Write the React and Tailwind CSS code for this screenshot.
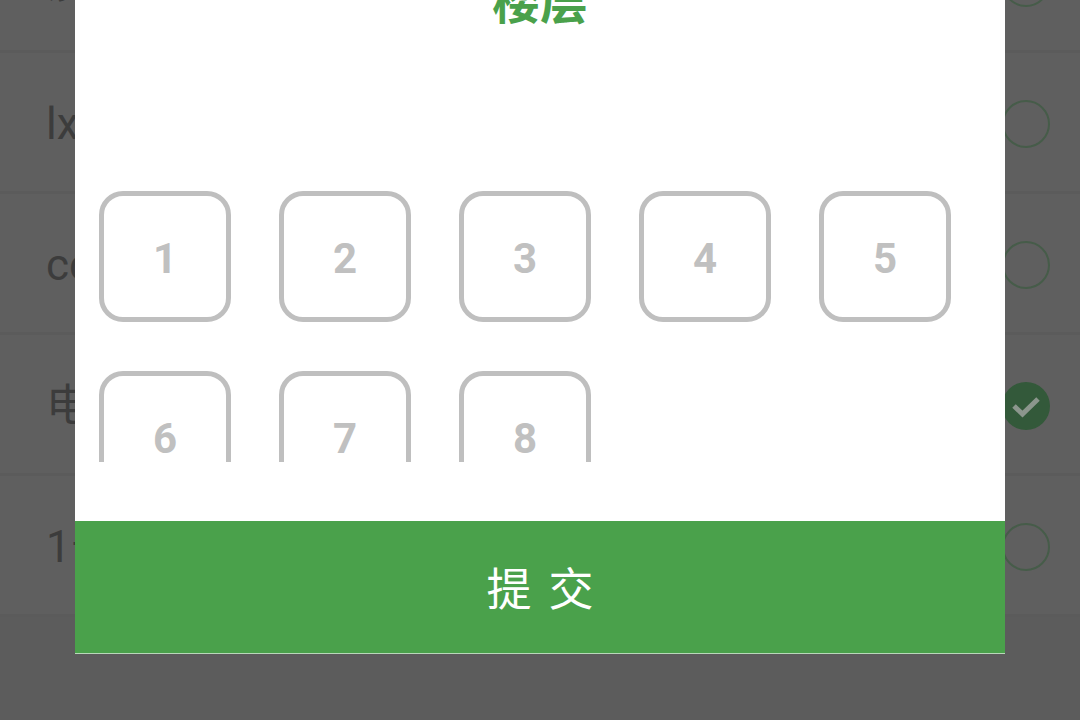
import React from 'react'

const rows = [
  { label: '没', checked: false },
  { label: 'lxxx', checked: false },
  { label: 'cccc', checked: false },
  { label: '电梯', checked: true },
  { label: '1号', checked: false },
]

const floors = [1, 2, 3, 4, 5, 6, 7, 8]

const Radio = ({ checked }) => {
  if (checked) {
    return (
      <div className="w-[48px] h-[48px] rounded-full bg-[#33593a] flex items-center justify-center">
        <svg width="34" height="34" viewBox="0 0 34 34" fill="none">
          <path d="M5 17 L13.5 25 L29 10" stroke="#8c968d" strokeWidth="5" />
        </svg>
      </div>
    )
  }
  return <div className="w-[48px] h-[48px] rounded-full border-2 border-[#465c49]" />
}

export default function App() {
  return (
    <div
      className="relative w-[1080px] h-[720px] overflow-hidden bg-[#5c5c5c]"
      style={{ fontFamily: 'Roboto, "Noto Sans CJK SC", sans-serif' }}
    >
      {/* list behind the dialog */}
      <div className="flex flex-col -mt-[88px]">
        {rows.map((row, i) => (
          <div
            key={i}
            className="h-[141px] pt-[4px] flex items-center justify-between pl-[46px] pr-[30px] bg-[#5f5f5f] border-b-[3px] border-[#5b5b5b]"
          >
            <span className="text-[44px] text-[#3c3c3c]">{row.label}</span>
            <Radio checked={row.checked} />
          </div>
        ))}
      </div>

      {/* dialog */}
      <div className="absolute left-[75px] top-[-40px] w-[930px] h-[694px] bg-white flex flex-col">
        <div className="h-[231px] shrink-0">
          <h2 className="mt-[15px] text-center text-[48px] leading-[56px] font-bold text-[#4aa14b]">楼层</h2>
        </div>
        <div className="h-[271px] shrink-0 overflow-hidden pl-[24px]">
          <div className="grid grid-cols-5 w-[852px] gap-x-[48px] gap-y-[49px]">
            {floors.map((n) => (
              <div
                key={n}
                className="w-[132px] h-[131px] pt-[3px] rounded-[24px] border-[5px] border-[#bfbfbf] flex items-center justify-center text-[42px] font-bold text-[#c0c0c0]"
              >
                {n}
              </div>
            ))}
          </div>
        </div>
        <div className="flex-1" />
        <button className="h-[133px] pt-[8px] pl-[3px] shrink-0 bg-[#4aa14b] text-white text-[45px] tracking-[3px] border-b border-[#b9d8ba]">
          提 交
        </button>
      </div>
    </div>
  )
}
